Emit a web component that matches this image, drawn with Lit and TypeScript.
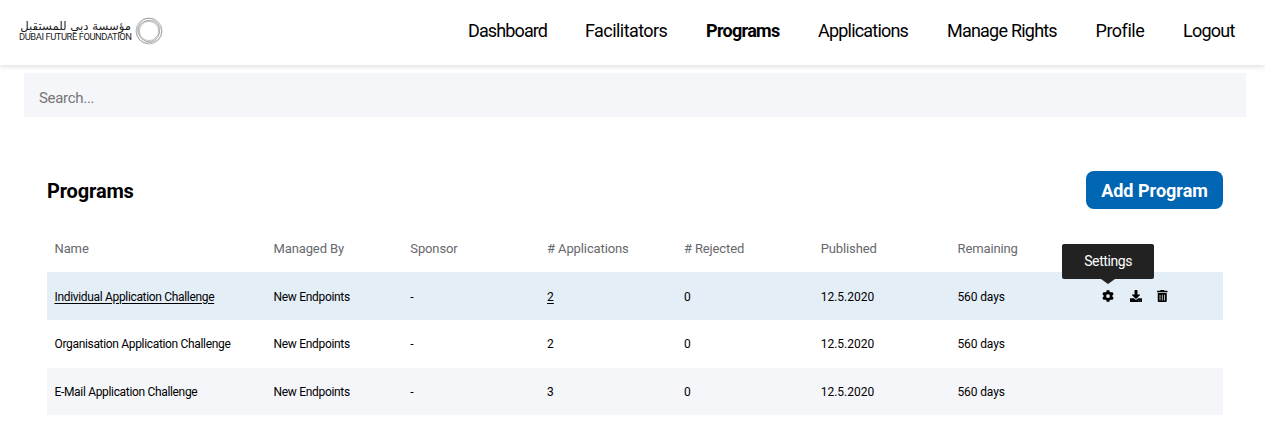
import { LitElement, html, css, svg } from "lit";
import { customElement } from "lit/decorators.js";
import { classMap } from "lit/directives/class-map.js";
import { styleMap } from "lit/directives/style-map.js";

interface NavItem {
  label: string;
  tracking: number;
  active?: boolean;
}

interface Program {
  name: string;
  manager: string;
  sponsor: string;
  applications: number;
  rejected: number;
  published: string;
  remaining: string;
  hovered?: boolean;
}

const NAV: NavItem[] = [
  { label: "Dashboard", tracking: -0.88 },
  { label: "Facilitators", tracking: -0.56 },
  { label: "Programs", tracking: -0.7, active: true },
  { label: "Applications", tracking: -0.8 },
  { label: "Manage Rights", tracking: -0.78 },
  { label: "Profile", tracking: -0.48 },
  { label: "Logout", tracking: -0.75 },
];

const COLUMNS = ["Name", "Managed By", "Sponsor", "# Applications", "# Rejected", "Published", "Remaining"];

const common = { manager: "New Endpoints", sponsor: "-", rejected: 0, published: "12.5.2020", remaining: "560 days" };

const PROGRAMS: Program[] = [
  { ...common, name: "Individual Application Challenge", applications: 2, hovered: true },
  { ...common, name: "Organisation Application Challenge", applications: 2 },
  { ...common, name: "E-Mail Application Challenge", applications: 3 },
];

@customElement("app-logo")
export class AppLogo extends LitElement {
  static styles = css`
    :host { display: flex; align-items: center; gap: 4px; color: #1c1c1c; }
    .words { display: flex; flex-direction: column; width: 112px; padding-top: 1px; }
    .ar { font: 11.7px/11px "DejaVu Sans", sans-serif; white-space: nowrap; direction: rtl; }
    .en { font: 9.4px/10px Roboto, sans-serif; white-space: nowrap; letter-spacing: -0.44px; }
    svg { display: block; flex: none; }
  `;
  render() {
    return html`
      <div class="words">
        <span class="ar" lang="ar">مؤسسة دبي للمستقبل</span>
        <span class="en">DUBAI FUTURE FOUNDATION</span>
      </div>
      <svg width="28" height="28" viewBox="0 0 28 28" fill="none" stroke="#555" stroke-width="0.3">
        <circle cx="14" cy="14" r="13" stroke-opacity=".7" stroke-width=".6" />
        <circle cx="14" cy="14" r="9.6" stroke-opacity=".7" stroke-width=".5" />
        ${[20, 140, 260].map(
          (a) => svg`<ellipse cx="15" cy="14" rx="11.7" ry="10.9" stroke-opacity=".9" transform="rotate(${a} 14 14)" />`
        )}
      </svg>
    `;
  }
}

@customElement("app-root")
export class AppRoot extends LitElement {
  static styles = css`
    :host { display: block; height: 421px; overflow: hidden; background: #fff; color: #000; font-family: Roboto, "Noto Sans", sans-serif; }
    * { box-sizing: border-box; }
    .header { display: flex; align-items: center; justify-content: space-between; height: 65px; padding: 0 30px 3px 19px; box-shadow: 0 1px 6px rgba(0, 0, 0, 0.16); }
    .nav { display: grid; grid-template-columns: 117px 121px 112px 129px 148.5px 87.5px 52px; font-size: 18px; line-height: 24px; white-space: nowrap; }
    .item.active { font-weight: 700; }
    .search { display: flex; align-items: center; height: 44px; margin: 8px 19px 0 24px; padding: 5px 15px 0; background: #f5f6fa; color: #757575; font-size: 15px; line-height: 20px; letter-spacing: -0.3px; }
    .content { padding: 54px 42px 0 47px; }
    .title-row { display: flex; align-items: center; justify-content: space-between; height: 38px; }
    .title { margin: 0; padding-top: 2px; font-size: 20px; line-height: 26px; font-weight: 700; letter-spacing: -0.15px; }
    .add { width: 137px; height: 38px; padding: 2px 0 0; border: 0; border-radius: 8px; background: #0065b3; color: #fff; font: 700 18px/36px Roboto, sans-serif; text-align: center; }
    .table { margin-top: 16px; }
    .row { display: grid; grid-template-columns: 219px repeat(6, 136.8px) 1fr; align-items: center; height: 48px; font-size: 12px; line-height: 16px; white-space: nowrap; }
    .row.head { height: 47px; color: #67686c; font-size: 13px; letter-spacing: -0.12px; }
    .row.hovered { background: #e4eef7; }
    .row.striped { height: 47px; background: #f5f6fa; }
    .cell { padding-left: 7.5px; }
    .hovered .cell { padding-top: 1px; }
    .cell.name { letter-spacing: -0.33px; }
    .cell.manager { letter-spacing: -0.31px; }
    .cell.days { letter-spacing: -0.12px; }
    .hovered .link { text-decoration: underline; text-underline-offset: 2px; }
    .actions { display: flex; align-items: center; gap: 16px; padding-left: 15.4px; }
    .action { position: relative; display: block; height: 12px; }
    .action svg { display: block; }
    .action:last-child { margin-left: -1px; }
    .tooltip { position: absolute; left: 50%; bottom: 23px; width: 92px; height: 35px; margin-left: -46px; border-radius: 2px; background: #222; color: #fff; font-size: 14px; line-height: 35px; text-align: center; letter-spacing: -0.4px; }
    .tooltip::after { content: ""; position: absolute; left: 39px; top: 35px; border: 7px solid transparent; border-top: 5px solid #222; border-bottom: 0; }
  `;

  private actions() {
    return html`
      <span class="action">
        <svg width="12" height="12" viewBox="0 0 512 512"><path d="M487 315l-43-25c4-23 4-46 0-69l43-25c5-3 7-9 6-14-11-36-30-68-55-95-4-4-10-5-15-2l-43 24c-18-15-38-27-60-35V25c0-6-4-11-9-12-37-8-74-8-110 0-6 1-9 6-9 12v49c-22 8-42 20-60 35L90 85c-5-3-11-2-15 2-25 27-44 59-55 95-2 5 1 11 5 14l43 25c-4 23-4 46 0 69l-43 25c-4 3-7 9-5 14 11 36 30 68 55 95 4 4 10 5 15 2l42-24c18 15 38 27 60 35v49c0 6 4 11 9 12 37 8 74 8 110 0 6-1 9-6 9-12v-49c22-8 42-20 60-35l43 24c5 3 11 2 15-2 25-27 44-59 55-95 1-5-1-11-6-14zM256 336a80 80 0 1 1 0-160 80 80 0 0 1 0 160z"/></svg>
        <span class="tooltip">Settings</span>
      </span>
      <span class="action">
        <svg width="12" height="12" viewBox="0 0 512 512"><path d="M216 0h80c13 0 24 11 24 24v168h88c18 0 27 21 14 34L270 378c-7 7-20 7-27 0L90 226c-13-13-4-34 14-34h88V24c0-13 11-24 24-24zm296 376v112c0 13-11 24-24 24H24c-13 0-24-11-24-24V376c0-13 11-24 24-24h147l49 49c20 20 52 20 72 0l49-49h147c13 0 24 11 24 24zm-124 88a20 20 0 1 0-40 0 20 20 0 0 0 40 0zm64 0a20 20 0 1 0-40 0 20 20 0 0 0 40 0z"/></svg>
      </span>
      <span class="action">
        <svg width="10.5" height="12" viewBox="0 0 448 512"><path fill-rule="evenodd" d="M32 464a48 48 0 0 0 48 48h288a48 48 0 0 0 48-48V128H32zM304 208a16 16 0 0 1 32 0v224a16 16 0 0 1-32 0zm-96 0a16 16 0 0 1 32 0v224a16 16 0 0 1-32 0zm-96 0a16 16 0 0 1 32 0v224a16 16 0 0 1-32 0zM432 32H312l-9-19a24 24 0 0 0-22-13H167a24 24 0 0 0-22 13l-9 19H16A16 16 0 0 0 0 48v32a16 16 0 0 0 16 16h416a16 16 0 0 0 16-16V48a16 16 0 0 0-16-16z"/></svg>
      </span>
    `;
  }

  private row(p: Program, index: number) {
    return html`
      <div class=${classMap({ row: true, hovered: !!p.hovered, striped: index % 2 === 0 && !p.hovered })}>
        <div class="cell name"><span class="link">${p.name}</span></div>
        <div class="cell manager">${p.manager}</div>
        <div class="cell">${p.sponsor}</div>
        <div class="cell"><span class="link">${p.applications}</span></div>
        <div class="cell">${p.rejected}</div>
        <div class="cell">${p.published}</div>
        <div class="cell days">${p.remaining}</div>
        <div class="actions">${p.hovered ? this.actions() : ""}</div>
      </div>
    `;
  }

  render() {
    return html`
      <header class="header">
        <app-logo></app-logo>
        <nav class="nav">
          ${NAV.map(
            (n) => html`<span
              class=${classMap({ item: true, active: !!n.active })}
              style=${styleMap({ letterSpacing: `${n.tracking}px` })}
            >${n.label}</span>`
          )}
        </nav>
      </header>
      <div class="search">Search...</div>
      <main class="content">
        <div class="title-row">
          <h1 class="title">Programs</h1>
          <button class="add">Add Program</button>
        </div>
        <div class="table">
          <div class="row head">${COLUMNS.map((c) => html`<div class="cell">${c}</div>`)}</div>
          ${PROGRAMS.map((p, i) => this.row(p, i))}
        </div>
      </main>
    `;
  }
}
